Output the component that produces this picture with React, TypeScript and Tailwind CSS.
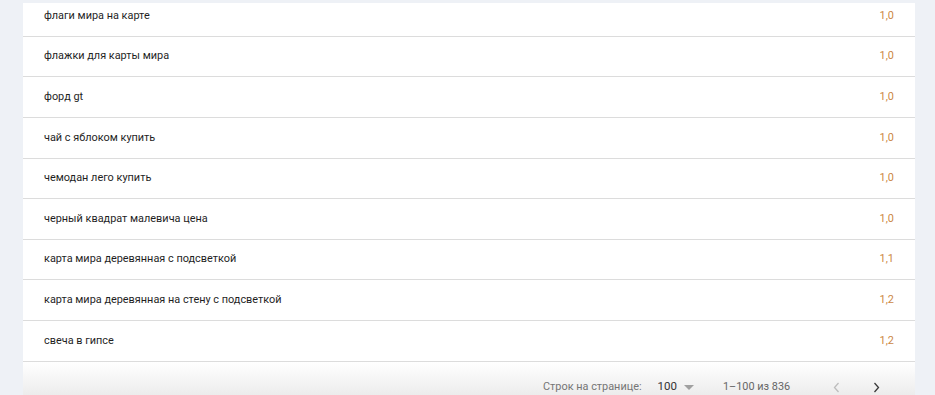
import React from "react";

const rows: [string, string][] = [
  ["флаги мира на карте", "1,0"],
  ["флажки для карты мира", "1,0"],
  ["форд gt", "1,0"],
  ["чай с яблоком купить", "1,0"],
  ["чемодан лего купить", "1,0"],
  ["черный квадрат малевича цена", "1,0"],
  ["карта мира деревянная с подсветкой", "1,1"],
  ["карта мира деревянная на стену с подсветкой", "1,2"],
  ["свеча в гипсе", "1,2"],
];

export default function App() {
  return (
    <div
      className="relative w-[935px] h-[395px] overflow-hidden bg-[#eef1f6] pl-[23px]"
      style={{ fontFamily: "Roboto, 'Liberation Sans', sans-serif" }}
    >
      <div className="w-[892px] bg-white mt-[-3.8px]">
        {rows.map(([q, v], i) => (
          <div
            key={i}
            className="flex items-center justify-between pl-[21px] pr-[21px] border-b border-[#dcdcdc] h-[40.6px]"
          >
            <span className="text-[10.9px] text-[#1f1f1f]">{q}</span>
            <span className="text-[10.9px] text-[#cc8744]">{v}</span>
          </div>
        ))}
        <div className="h-[48px] flex items-center text-[10.9px] bg-gradient-to-b from-white to-[#e4e4e4] pt-[3px]">
          <span className="ml-[520px] text-[#757575]">Строк на странице:</span>
          <span className="ml-[16px] text-[#333333] text-[11.5px]">100</span>
          <svg width="10" height="5" viewBox="0 0 10 5" className="ml-[7px]">
            <path d="M0 0 L10 0 L5 5 Z" fill="#a0a0a0" />
          </svg>
          <span className="ml-[29px] text-[#666666]">1–100 из 836</span>
          <svg width="7" height="11" viewBox="0 0 7 11" className="ml-[43px]">
            <path d="M5.5 1 L1.5 5.5 L5.5 10" stroke="#bdbdbd" strokeWidth="1.3" fill="none" />
          </svg>
          <svg width="7" height="11" viewBox="0 0 7 11" className="ml-[33px]">
            <path d="M1.5 1 L5.5 5.5 L1.5 10" stroke="#3a3a3a" strokeWidth="1.3" fill="none" />
          </svg>
        </div>
      </div>
      <div className="absolute left-0 top-0 w-full h-[3px] bg-[#eef1f6]" />
    </div>
  );
}
